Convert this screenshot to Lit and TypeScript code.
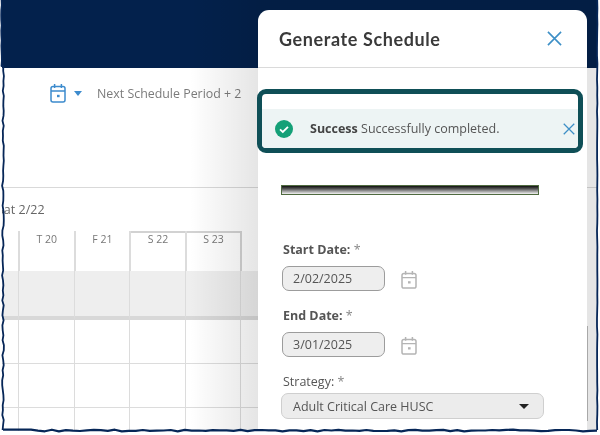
import { LitElement, html, css, svg } from "lit";
import { customElement } from "lit/decorators.js";

function jagged(points: [number, number][], amp: number, step: number, seed: number): string {
  let s = seed;
  const rnd = () => {
    s = (s * 9301 + 49297) % 233280;
    return s / 233280 - 0.5;
  };
  let d = "";
  for (let i = 0; i < points.length - 1; i++) {
    const [x0, y0] = points[i];
    const [x1, y1] = points[i + 1];
    const len = Math.hypot(x1 - x0, y1 - y0);
    const n = Math.round(len / step);
    for (let k = 0; k <= n; k++) {
      const t = k / n;
      const j = rnd() * amp;
      const x = x0 + (x1 - x0) * t + (x0 === x1 ? j : 0);
      const y = y0 + (y1 - y0) * t + (y0 === y1 ? j : 0);
      d += `${d ? "L" : "M"}${x.toFixed(1)} ${y.toFixed(1)}`;
    }
  }
  return d;
}

const calendar = (cls: string) => html`<svg class=${cls} viewBox="0 0 16 20" preserveAspectRatio="none" fill="none" stroke="currentColor" stroke-width="1.5">
  <rect x="1" y="3.6" width="14" height="15.4" rx="2"></rect>
  <path d="M1 8h14M4.6 1v4M11.4 1v4"></path>
  <rect x="7" y="11.8" width="2.6" height="2.4" fill="currentColor" stroke="none"></rect>
</svg>`;

const closeX = (cls: string) => html`<svg class=${cls} viewBox="0 0 16 16" fill="none" stroke="currentColor" stroke-width="1.7">
  <path d="M1 1l14 14M15 1L1 15"></path>
</svg>`;

@customElement("app-root")
export class AppRoot extends LitElement {
  static styles = css`
    :host {
      display: block;
      width: 600px;
      height: 435px;
      background: #fff;
      font-family: "Open Sans", "Liberation Sans", sans-serif;
      font-size: 12.5px;
      color: #555;
    }
    .stage {
      position: relative;
      width: 600px;
      height: 435px;
      box-sizing: border-box;
      padding: 0 3px 4px 2px;
      overflow: hidden;
      filter: blur(0.45px);
    }
    .page {
      position: relative;
      height: 431px;
      overflow: hidden;
      background: #fff;
    }
    .topbar {
      height: 68px;
      background: #03214c;
    }
    .toolbar {
      height: 120px;
      box-sizing: border-box;
      border-bottom: 1px solid #d9d9d9;
      display: flex;
      align-items: flex-start;
      padding: 15px 0 0 48px;
    }
    .tool-cal {
      width: 16px;
      height: 20px;
      color: #3d8bcd;
    }
    .tool-caret {
      width: 0;
      height: 0;
      margin: 8px 0 0 8px;
      border-left: 4.5px solid transparent;
      border-right: 4.5px solid transparent;
      border-top: 5px solid #3d8bcd;
    }
    .tool-text {
      margin: 1px 0 0 15px;
      color: #7b7b7b;
      font-size: 12.4px;
      line-height: 20px;
    }
    .range {
      height: 43px;
      box-sizing: border-box;
      padding-top: 13px;
      margin-left: -5px;
      line-height: 17px;
      color: #666;
    }
    .grid {
      display: grid;
      grid-template-columns: 16px repeat(10, 55.6px);
      grid-template-rows: 40px 49px 44px 44px 24px;
    }
    .cell {
      box-sizing: border-box;
      border-left: 1px solid #dcdcdc;
      border-bottom: 1px solid #dcdcdc;
    }
    .cell.first {
      border-left: 0;
    }
    .cell.head {
      border-left: 2px solid #dcdcdc;
      border-bottom: 0;
      text-align: center;
      font-size: 10.5px;
      line-height: 15px;
      padding-top: 1px;
      color: #777;
    }
    .cell.head.first {
      border-left: 0;
    }
    .cell.weekend {
      box-shadow: inset 0 2px 0 #d2d2d2;
    }
    .cell.endline {
      border-left: 2px solid #d2d2d2;
    }
    .cell.band {
      background: #eeeeee;
      border-bottom: 4px solid #d8d8d8;
    }
    .cell.last {
      border-bottom: 0;
    }
    .shade {
      position: absolute;
      inset: 0;
      pointer-events: none;
      background: linear-gradient(to right, rgba(0, 0, 0, 0) 188px, rgba(0, 0, 0, 0.1) 256px, rgba(0, 0, 0, 0.1) 100%);
    }
    .modal {
      position: absolute;
      left: 256px;
      top: 10px;
      width: 329px;
      height: 421px;
      background: #fff;
      border-radius: 11px 11px 0 0;
      display: flex;
      flex-direction: column;
      align-items: flex-start;
    }
    .modal-head {
      align-self: stretch;
      height: 58px;
      box-sizing: border-box;
      border-bottom: 1px solid #dadada;
      display: flex;
      align-items: center;
      justify-content: space-between;
      padding: 0 25px 0 21px;
    }
    .title {
      font-family: Lato, "Liberation Sans", sans-serif;
      font-size: 18px;
      font-weight: 700;
      letter-spacing: 0.6px;
      color: #3a3a3a;
    }
    .head-x {
      width: 15px;
      height: 15px;
      color: #3d8fc6;
    }
    .frame {
      margin: 21px 0 0 -1px;
      width: 326px;
      height: 64px;
      box-sizing: border-box;
      border: 5px solid #0f4f57;
      border-radius: 9px;
      padding-top: 15px;
      background: #fff;
    }
    .alert {
      height: 39px;
      background: #edf4f4;
      display: flex;
      align-items: center;
      border-radius: 0 0 4px 4px;
      padding-left: 13px;
      padding-right: 3px;
    }
    .ok {
      width: 18px;
      height: 18px;
      flex: none;
    }
    .alert-text {
      margin-left: 17px;
      flex: 1;
      color: #555;
      white-space: nowrap;
    }
    .alert-text b {
      color: #444;
    }
    .alert-x {
      width: 12px;
      height: 12px;
      color: #3d8fc6;
    }
    .bar {
      margin: 32px 0 0 23px;
      width: 258px;
      height: 10px;
      box-sizing: border-box;
      border: 1px solid #4f6a3f;
      background: linear-gradient(to bottom, #111 0%, #555 35%, #aaa 70%, #f2f2f2 100%);
    }
    .label {
      margin: 0 0 0 25px;
      line-height: 16px;
      font-weight: 700;
      color: #555;
    }
    .label span {
      font-weight: 400;
      color: #888;
    }
    .label.start {
      margin-top: 47px;
    }
    .label.end {
      margin-top: 17px;
    }
    .label.plain {
      font-weight: 400;
      margin-top: 17px;
    }
    .date-row {
      display: flex;
      align-items: flex-start;
      margin: 8px 0 0 24px;
    }
    .date {
      width: 103px;
      height: 25px;
      box-sizing: border-box;
      background: #eeeeee;
      border: 1px solid #9c9c9c;
      border-radius: 7px;
      padding-left: 10px;
      line-height: 23px;
      color: #555;
    }
    .date-cal {
      width: 16px;
      height: 19px;
      margin: 4px 0 0 16px;
      color: #b4b4b4;
    }
    .select {
      margin: 3px 0 0 23px;
      width: 263px;
      height: 26px;
      box-sizing: border-box;
      background: #ececec;
      border: 1px solid #cfcfcf;
      border-radius: 7px;
      display: flex;
      align-items: center;
      justify-content: space-between;
      padding: 0 14px 0 11px;
      color: #555;
    }
    .select i {
      width: 0;
      height: 0;
      border-left: 5px solid transparent;
      border-right: 5px solid transparent;
      border-top: 5px solid #222;
    }
    .scroll {
      position: absolute;
      right: -1px;
      top: 316px;
      width: 1px;
      height: 95px;
      background: #a8a8a8;
    }
    .torn {
      position: absolute;
      inset: 0;
      width: 600px;
      height: 435px;
      pointer-events: none;
    }
  `;

  private heads = ["", "T 20", "F 21", "S 22", "S 23", "", "", "", "", "", ""];

  private renderGrid() {
    const rows = [0, 1, 2, 3, 4];
    return rows.map((r) =>
      this.heads.map((h, c) => {
        const cls = ["cell"];
        if (c === 0) cls.push("first");
        if (r === 0) cls.push("head");
        if (r === 0 && (c === 3 || c === 4)) cls.push("weekend");
        if (r === 0 && c === 5) cls.push("endline");
        if (r === 1) cls.push("band");
        if (r === 4) cls.push("last");
        return html`<div class=${cls.join(" ")}>${r === 0 ? h : ""}</div>`;
      })
    );
  }

  render() {
    const left = jagged([[1.5, 0], [1.5, 66]], 0.8, 5, 11);
    const left2 = jagged([[3, 66], [3, 430]], 1.8, 5, 37);
    const bottom = jagged([[3, 430.5], [597, 430.5]], 1.8, 7, 71);
    const right = jagged([[597.2, 0], [597.2, 430]], 0.5, 8, 5);
    return html`<div class="stage">
      <div class="page">
        <div class="topbar"></div>
        <div class="toolbar">
          ${calendar("tool-cal")}
          <div class="tool-caret"></div>
          <div class="tool-text">Next Schedule Period + 2</div>
        </div>
        <div class="range">Sat 2/22</div>
        <div class="grid">${this.renderGrid()}</div>
        <div class="shade"></div>
        <div class="modal">
          <div class="modal-head">
            <div class="title">Generate Schedule</div>
            ${closeX("head-x")}
          </div>
          <div class="frame">
            <div class="alert">
              <svg class="ok" viewBox="0 0 18 18">
                <circle cx="9" cy="9" r="9" fill="#14a077"></circle>
                <path d="M5 9.4l2.8 2.6L13 6.8" fill="none" stroke="#fff" stroke-width="1.8"></path>
              </svg>
              <div class="alert-text"><b>Success</b> Successfully completed.</div>
              ${closeX("alert-x")}
            </div>
          </div>
          <div class="bar"></div>
          <div class="label start">Start Date: <span>*</span></div>
          <div class="date-row">
            <div class="date">2/02/2025</div>
            ${calendar("date-cal")}
          </div>
          <div class="label end">End Date: <span>*</span></div>
          <div class="date-row">
            <div class="date">3/01/2025</div>
            ${calendar("date-cal")}
          </div>
          <div class="label plain">Strategy: <span>*</span></div>
          <div class="select">Adult Critical Care HUSC<i></i></div>
          <div class="scroll"></div>
        </div>
      </div>
      <svg class="torn" viewBox="0 0 600 435" fill="none" stroke="#062657" stroke-linejoin="round">
        ${svg`<path d=${left + left2.replace("M", "L")} stroke-width="1.8"></path>
        <path d=${bottom} stroke-width="2.2"></path>
        <path d=${right} stroke-width="1.8"></path>`}
      </svg>
    </div>`;
  }
}
